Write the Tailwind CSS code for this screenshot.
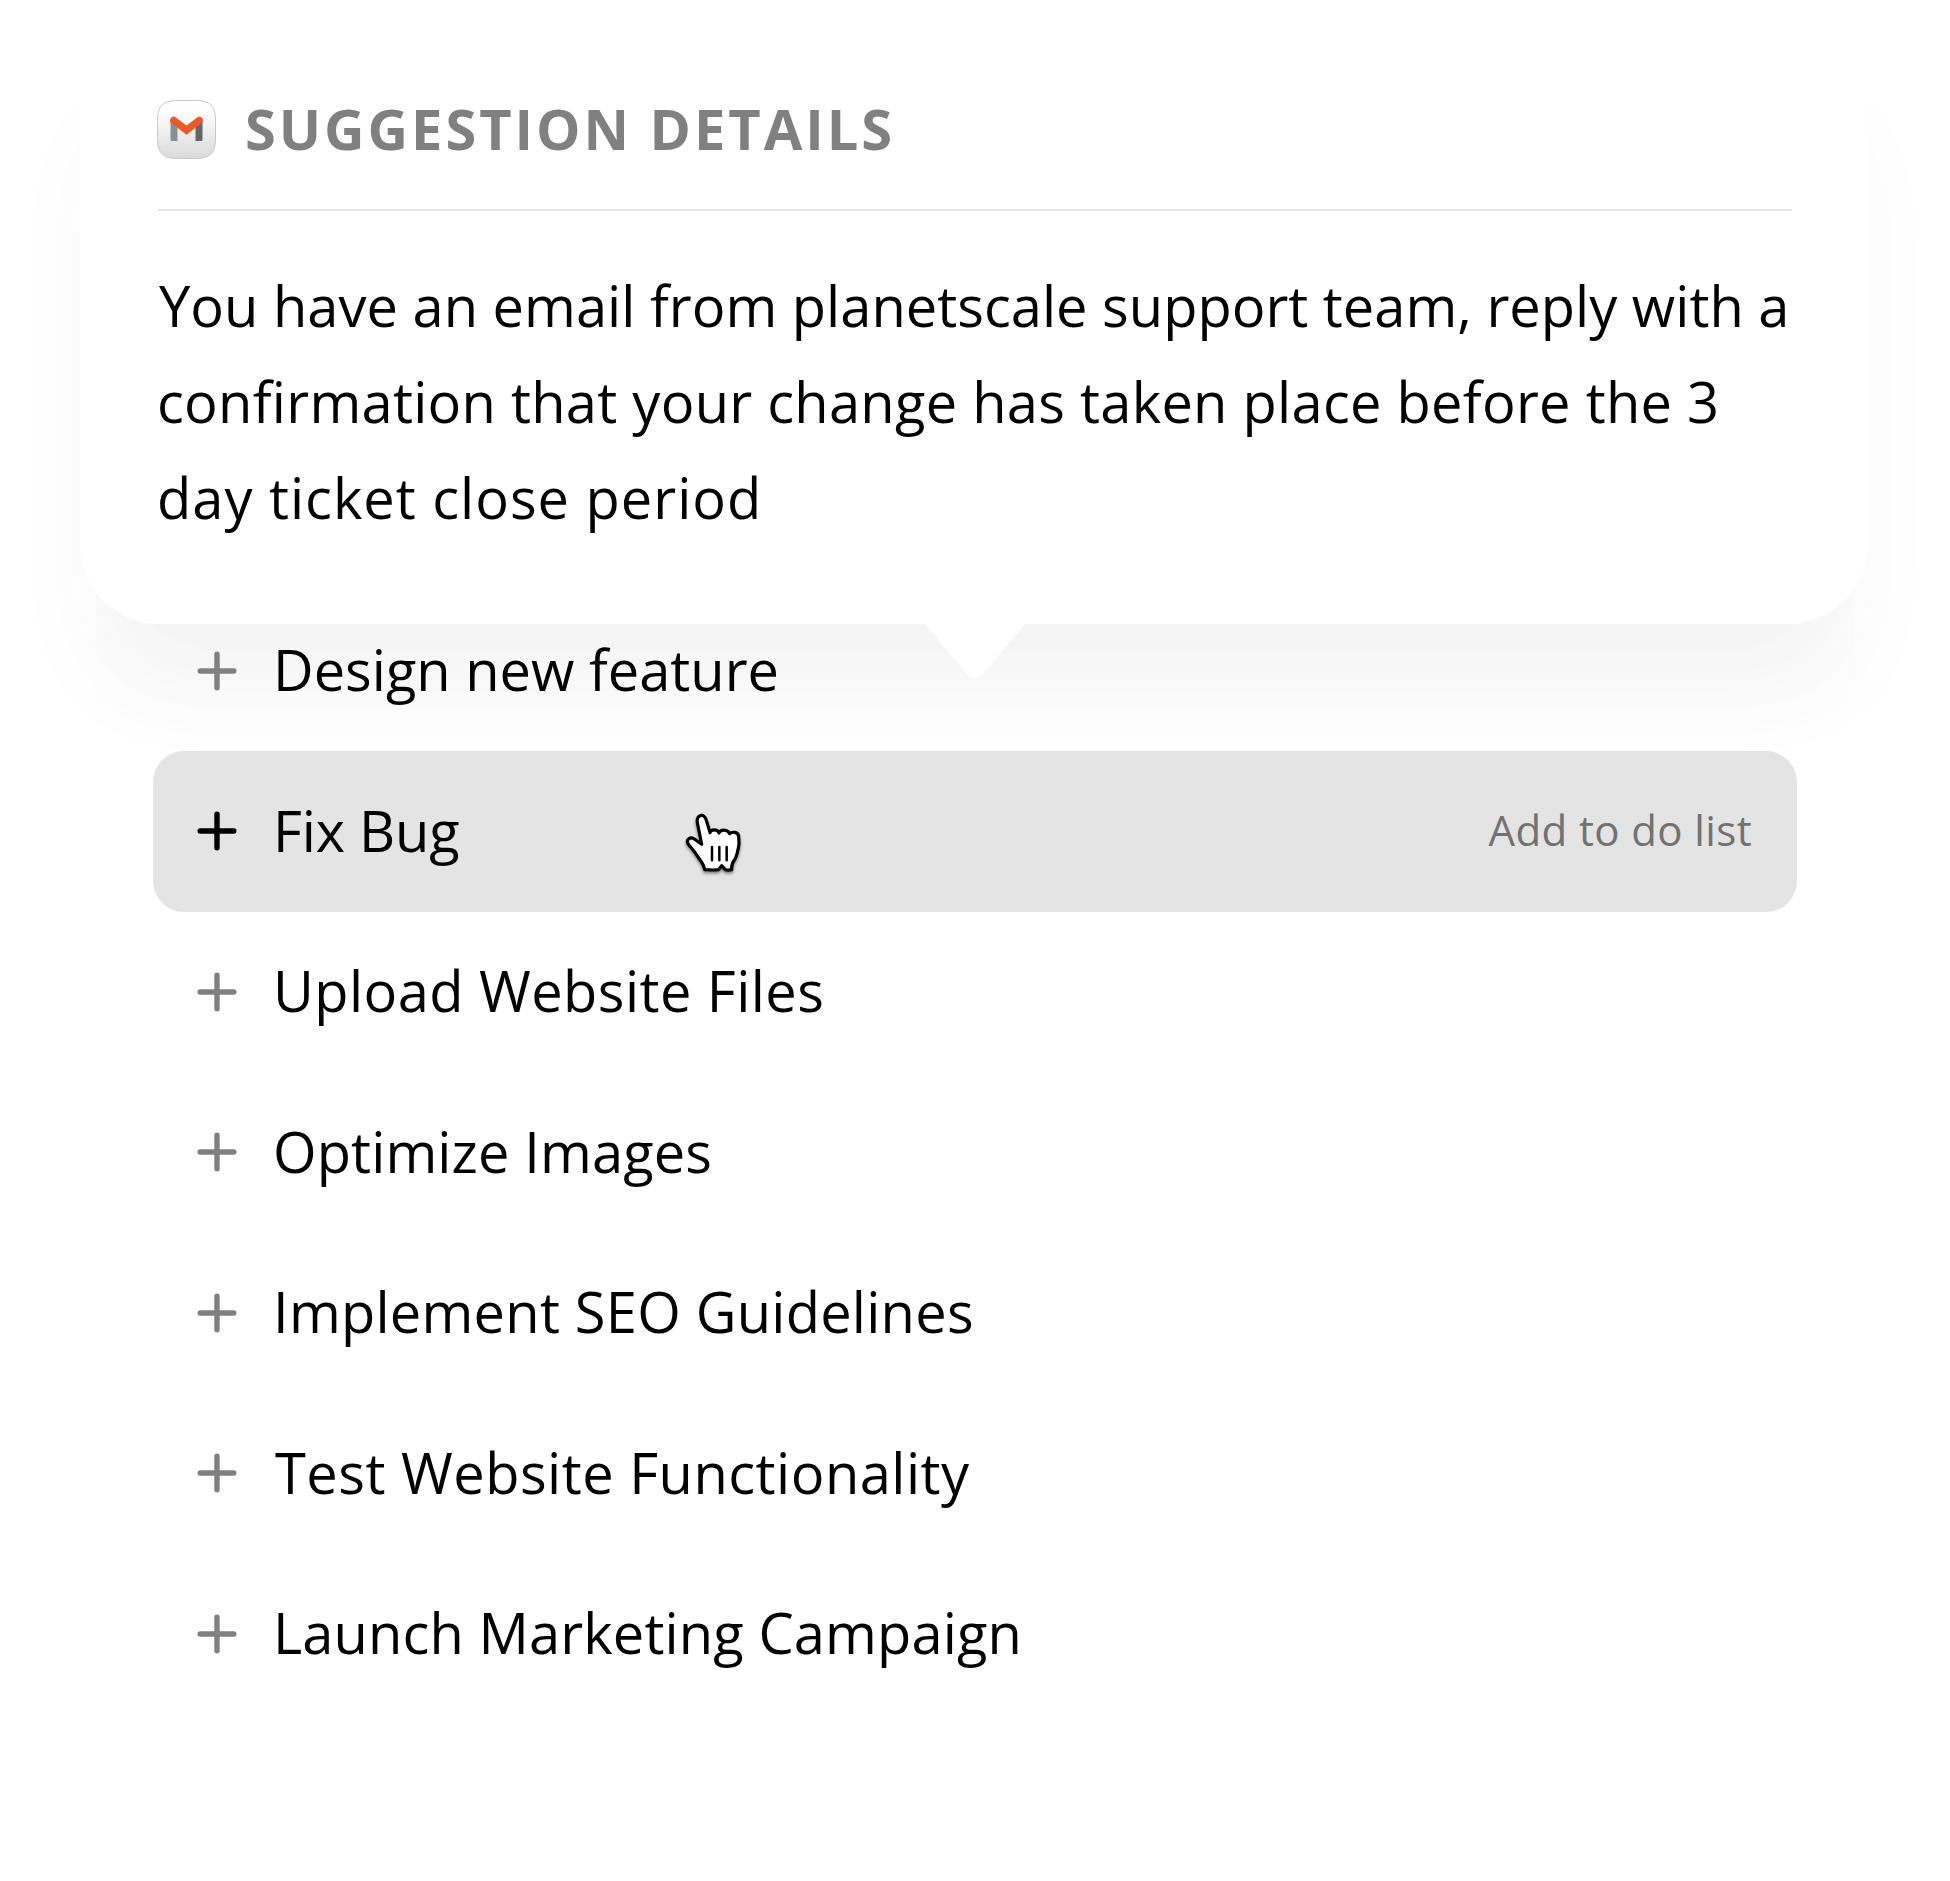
<!DOCTYPE html>
<html lang="en">
<head>
<meta charset="utf-8">
<title>Suggestions</title>
<script src="https://cdn.jsdelivr.net/npm/@tailwindcss/browser@4"></script>
</head>
<body class="h-[1881px] overflow-hidden bg-white font-['Open_Sans',sans-serif] text-[56px] text-black">
<svg class="hidden">
  <symbol id="plus" viewBox="0 0 40 40"><path d="M20 3.2v33.6M3.2 20h33.6" fill="none" stroke="currentColor" stroke-width="5.4" stroke-linecap="round"/></symbol>
</svg>
<main class="relative h-[1881px] px-24">
  <!-- Shadow cast by the popover outside the list card -->
  <div class="absolute left-20 top-6 h-[600px] w-[1788px] rounded-[80px] shadow-[0_80px_100px_-4px_rgba(0,0,0,0.027)]"></div>

  <!-- List card -->
  <section class="relative h-[1881px] w-[1757px] overflow-hidden rounded-b-[60px] pt-[590.5px] pl-[57px]">
    <div class="absolute -left-4 top-6 h-[600px] w-[1788px] rounded-[80px] shadow-[0_80px_100px_-10px_rgba(0,0,0,0.018)]"></div>
    <ul class="relative w-[1644px]">
      <li class="flex h-[160.5px] items-center pl-11">
        <svg class="size-10 text-[#808080]"><use href="#plus"/></svg>
        <span class="ml-9 pb-[3px] leading-none">Design new feature</span>
      </li>
      <li class="flex h-[160.5px] items-center rounded-[31px] bg-black/[0.105] pl-11 pr-[45px]">
        <svg class="size-10"><use href="#plus"/></svg>
        <span class="ml-9 pb-[3px] leading-none tracking-[-0.2px]">Fix Bug</span>
        <span class="ml-auto pb-[3px] text-[42px] leading-none tracking-[0.38px] text-[#727272]">Add to do list</span>
      </li>
      <li class="flex h-[160.5px] items-center pl-11">
        <svg class="size-10 text-[#808080]"><use href="#plus"/></svg>
        <span class="ml-9 pb-[3px] leading-none tracking-[0.45px]">Upload Website Files</span>
      </li>
      <li class="flex h-[160.5px] items-center pl-11">
        <svg class="size-10 text-[#808080]"><use href="#plus"/></svg>
        <span class="ml-9 pb-[3px] leading-none tracking-[0.12px]">Optimize Images</span>
      </li>
      <li class="flex h-[160.5px] items-center pl-11">
        <svg class="size-10 text-[#808080]"><use href="#plus"/></svg>
        <span class="ml-9 pb-[3px] leading-none tracking-[0.24px]">Implement SEO Guidelines</span>
      </li>
      <li class="flex h-[160.5px] items-center pl-11">
        <svg class="size-10 text-[#808080]"><use href="#plus"/></svg>
        <span class="ml-[38px] pb-[3px] leading-none tracking-[0.5px]">Test Website Functionality</span>
      </li>
      <li class="flex h-[160.5px] items-center pl-11">
        <svg class="size-10 text-[#808080]"><use href="#plus"/></svg>
        <span class="ml-9 pb-[3px] leading-none tracking-[0.12px]">Launch Marketing Campaign</span>
      </li>
    </ul>
  </section>

  <!-- Suggestion popover -->
  <section class="absolute left-20 top-6 h-[600px] w-[1788px] rounded-[80px] bg-white pl-[78px] pr-[76px] pt-[76px]">
    <header class="flex h-[111px] items-start border-b-2 border-[#e5e5e5]">
      <svg class="-ml-[3px] -mt-px h-[61px] w-[61px] overflow-visible" viewBox="0 0 61 61">
        <defs>
          <linearGradient id="tile" x1="0" y1="0" x2="0" y2="1"><stop offset="0.15" stop-color="#fff"/><stop offset="1" stop-color="#dadada"/></linearGradient>
        </defs>
        <path d="M23 1.5C7 1.500 2 6.500 2 22.500v16c0 16 5 21 21 21h16c16 0 21-5 21-21v-16c0-16-5-21-21-21z" transform="translate(.5)" fill="url(#tile)" stroke="#c8c8c8"/>
        <path d="M15.500 20h7v22H17q-1.500 0-1.500-1.500z" fill="#8b8f94"/>
        <path d="M40.500 20h7v20.500q0 1.500-1.500 1.500h-5.500z" fill="#666"/>
        <path d="M18.700 21.300 31.500 31.200 44.300 21.300" fill="none" stroke="#e8592b" stroke-width="7.200" stroke-linecap="round"/>
      </svg>
      <h1 class="ml-[29px] font-bold leading-[56px] tracking-[2.95px] text-[#808080]">SUGGESTION DETAILS</h1>
    </header>
    <p class="mt-[46px] whitespace-nowrap leading-[96px]">
      <span class="ml-px block tracking-[0.02px]">You have an email from planetscale support team, reply with a</span>
      <span class="-ml-px block tracking-[0.28px]">confirmation that your change has taken place before the 3</span>
      <span class="-ml-px block tracking-[1px]">day ticket close period</span>
    </p>
    <svg class="absolute left-[843px] top-[599px] h-[57px] w-[104px]" viewBox="0 0 104 57"><path d="M0 0h104v1h-2L60.500 50.500Q52 60 43.500 50.500L2 1H0z" fill="#fff"/></svg>
  </section>

  <!-- Pointer -->
  <svg class="absolute left-[670px] top-[800px] size-[90px] drop-shadow-[0_2px_1.5px_rgba(0,0,0,0.45)]" viewBox="0 0 270 270">
    <path d="M104 209C102 190 86 176 74 156L55 133C46 118 62 108 74 118L95 133 82 68C78 43 103 38 109 61L120 98C123 87 142 86 147 99 151 88 174 87 179 101 187 94 205 95 206 110L207 132C204 151 202 165 195 177 186 188 184 195 185 209 176 211 169 210 165 208L155 197 145 209C136 211 120 210 104 209Z" fill="#fff" stroke="#000" stroke-width="9.500" stroke-linejoin="round"/>
    <path d="M126 141v40M148 141v40M170 141v40" stroke="#000" stroke-width="7.500" stroke-linecap="round"/>
  </svg>
</main>
</body>
</html>
